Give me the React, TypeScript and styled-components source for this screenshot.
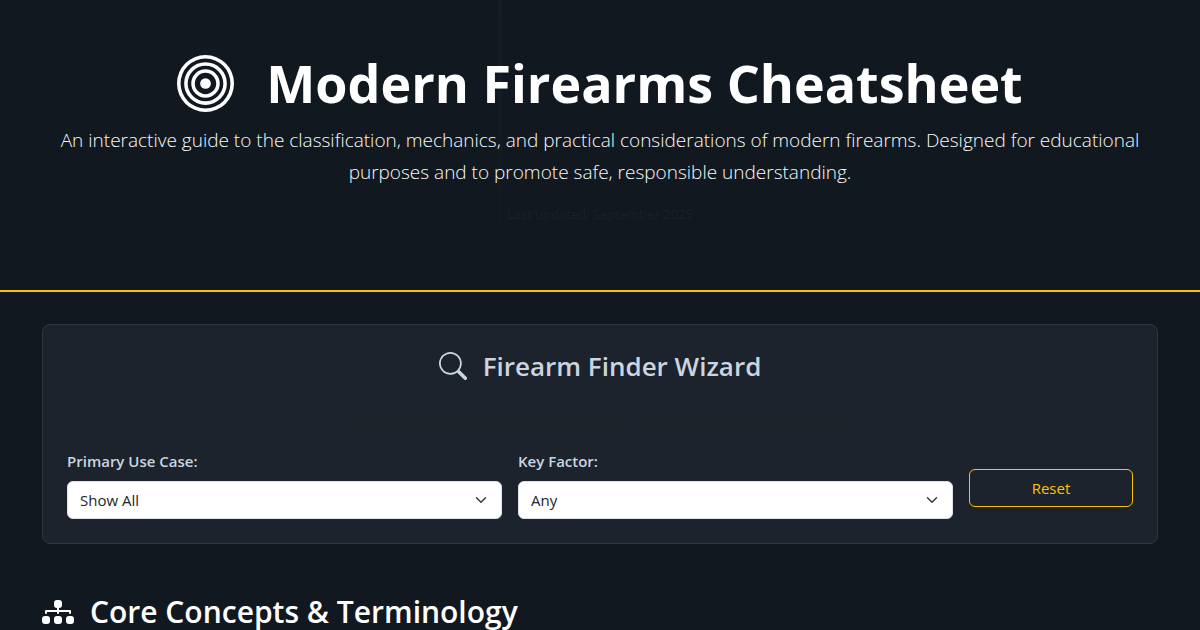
import React, { useState } from "react";
import styled, { createGlobalStyle } from "styled-components";
import { BsBullseye, BsSearch, BsDiagram3Fill } from "react-icons/bs";

const GlobalStyle = createGlobalStyle`
  *, *::before, *::after { box-sizing: border-box; }
  body {
    margin: 0;
    background: #11181f;
    color: #cbd5e1;
    font-family: "Segoe UI", "Open Sans", "Noto Sans", sans-serif;
    font-size: 16px;
    line-height: 26px;
  }
  h1, h2, h3, p { margin: 0; }
`;

const Container = styled.div`
  width: 100%;
  max-width: 1140px;
  margin: 0 auto;
  padding: 0 12px;
`;

const Header = styled.header`
  padding: 50px 0 64px;
  border-bottom: 2px solid #ffc107;
  text-align: center;
  background: linear-gradient(#181e25, #11181f 88%) calc(50% + -100px) 0 / 4px 100% no-repeat;
`;

const Title = styled.h1`
  display: flex;
  align-items: center;
  justify-content: center;
  gap: 32px;
  margin-bottom: 8px;
  color: #fff;
  font-size: 52px;
  font-weight: 700;
  line-height: 66px;
`;

const Lead = styled.p`
  color: #f8f9fa;
  font-size: 19px;
  font-weight: 300;
  line-height: 32px;
`;

const Updated = styled.p`
  margin-top: 14px;
  color: #1c2128;
  font-size: 13px;
  line-height: 24px;
`;

const Wizard = styled.section`
  margin: 32px 0 48px;
  padding: 24px;
  border: 1px solid #2d3641;
  border-radius: 8px;
  background: #1c232c;
`;

const WizardTitle = styled.h2`
  display: flex;
  align-items: center;
  justify-content: center;
  gap: 16px;
  color: #cbd5e1;
  font-size: 26px;
  font-weight: 600;
  line-height: 34px;
`;

const Hint = styled.p`
  margin: 24px 0 16px;
  color: #1f262a;
  font-size: 15px;
  line-height: 26px;
  text-align: center;
`;

const Filters = styled.form`
  display: grid;
  grid-template-columns: 435fr 435fr 164fr;
  gap: 16px;
  align-items: end;
`;

const Field = styled.div`
  display: flex;
  flex-direction: column;
  gap: 8px;
`;

const Label = styled.label`
  font-size: 15px;
  font-weight: 600;
  line-height: 24px;
`;

const SelectBox = styled.div`
  display: grid;
  align-items: center;

  > * { grid-area: 1 / 1; }
  > svg { justify-self: end; margin-right: 13px; pointer-events: none; }
`;

const Select = styled.select`
  width: 100%;
  height: 38px;
  padding: 0 36px 0 12px;
  border: 1px solid #dee2e6;
  border-radius: 6px;
  appearance: none;
  background: #fff;
  color: #212529;
  font: inherit;
  font-size: 15px;
`;

const ResetButton = styled.button`
  height: 38px;
  margin-bottom: 12px;
  border: 1px solid #ffc107;
  border-radius: 6px;
  background: transparent;
  color: #ffc107;
  font: inherit;
  font-size: 15px;
  cursor: pointer;
`;

const SectionTitle = styled.h2`
  display: flex;
  align-items: center;
  gap: 16px;
  color: #fff;
  font-size: 30px;
  font-weight: 600;
  line-height: 40px;
`;

function Chevron() {
  return (
    <svg width="16" height="12" viewBox="0 0 16 16" fill="none" aria-hidden="true">
      <path d="m2 5 6 6 6-6" stroke="#343a40" strokeWidth="2" strokeLinecap="round" strokeLinejoin="round" />
    </svg>
  );
}

type PickerProps = {
  id: string;
  label: string;
  options: string[];
  value: string;
  onChange: (value: string) => void;
};

function Picker({ id, label, options, value, onChange }: PickerProps) {
  return (
    <Field>
      <Label htmlFor={id}>{label}</Label>
      <SelectBox>
        <Select id={id} value={value} onChange={(e) => onChange(e.target.value)}>
          {options.map((option) => (
            <option key={option}>{option}</option>
          ))}
        </Select>
        <Chevron />
      </SelectBox>
    </Field>
  );
}

export default function App() {
  const [useCase, setUseCase] = useState("Show All");
  const [factor, setFactor] = useState("Any");

  const reset = () => {
    setUseCase("Show All");
    setFactor("Any");
  };

  return (
    <>
      <GlobalStyle />
      <Header>
        <Container>
          <Title>
            <BsBullseye size={57} aria-hidden="true" />
            Modern Firearms Cheatsheet
          </Title>
          <Lead>
            An interactive guide to the classification, mechanics, and practical considerations of modern
            firearms. Designed for educational purposes and to promote safe, responsible understanding.
          </Lead>
          <Updated>Last updated: September 2025</Updated>
        </Container>
      </Header>
      <Container as="main">
        <Wizard>
          <WizardTitle>
            <BsSearch size={28} aria-hidden="true" />
            Firearm Finder Wizard
          </WizardTitle>
          <Hint>Select your primary interest to highlight relevant civilian firearms below.</Hint>
          <Filters onSubmit={(e) => e.preventDefault()}>
            <Picker id="use-case" label="Primary Use Case:" options={["Show All"]} value={useCase} onChange={setUseCase} />
            <Picker id="key-factor" label="Key Factor:" options={["Any"]} value={factor} onChange={setFactor} />
            <ResetButton type="button" onClick={reset}>Reset</ResetButton>
          </Filters>
        </Wizard>
        <SectionTitle>
          <BsDiagram3Fill size={32} aria-hidden="true" />
          Core Concepts &amp; Terminology
        </SectionTitle>
      </Container>
    </>
  );
}
